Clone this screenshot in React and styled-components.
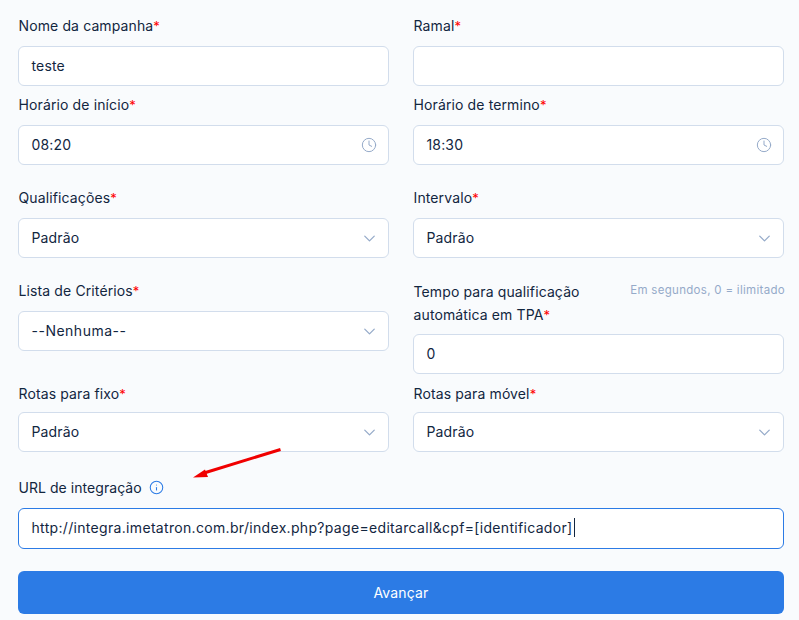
import React from "react";
import styled, { createGlobalStyle } from "styled-components";
import { Clock, ChevronDown, Info } from "lucide-react";

const Global = createGlobalStyle`
  html, body { margin: 0; padding: 0; background: #f9fbfd; }
  body { font-family: Inter, "Noto Sans", "Liberation Sans", sans-serif; color: #12263f; }
`;

const Page = styled.form`
  position: relative;
  width: 799px;
  height: 620px;
  box-sizing: border-box;
  padding: 15px 15px 0 18px;
  overflow: hidden;
`;

const Row = styled.div`
  display: grid;
  grid-template-columns: 371px 371px;
  column-gap: 24px;
  margin-bottom: ${(p) => p.$bottom}px;
`;

const Field = styled.div`
  display: flex;
  flex-direction: column;
  min-width: 0;
`;

const LabelRow = styled.div`
  display: flex;
  justify-content: space-between;
  align-items: flex-start;
  margin-bottom: ${(p) => p.$gap ?? 9}px;
`;

const Label = styled.label`
  display: block;
  margin-left: 0.5px;
  font-size: 14px;
  letter-spacing: 0.12px;
  line-height: ${(p) => p.$line ?? 22}px;
`;

const Required = styled.span`
  color: #f00;
  font-size: 13px;
  line-height: 0;
`;

const Hint = styled.span`
  margin-right: -1px;
  font-size: 11.5px;
  line-height: 20px;
  color: #95aac9;
  white-space: nowrap;
  letter-spacing: 0.3px;
`;

const Box = styled.div`
  display: flex;
  align-items: center;
  justify-content: space-between;
  box-sizing: border-box;
  height: ${(p) => p.$height ?? 40}px;
  padding: 0 12px 0 12.5px;
  background: #fff;
  border: 1px solid ${(p) => (p.$focus ? "#2c7be5" : "#d2ddec")};
  border-radius: 6px;
  font-size: 14px;
  white-space: nowrap;
`;

const Value = styled.span`
  margin-bottom: 2px;
  letter-spacing: ${(p) => p.$spread ?? 0.15}px;
`;

const Caret = styled.span`
  display: inline-block;
  width: 1px;
  height: 19px;
  margin-left: 1px;
  background: #12263f;
  vertical-align: -4px;
`;

const ClockIcon = styled(Clock)`
  margin-right: -1px;
`;

const Chevron = styled(ChevronDown)`
  margin-right: -3px;
`;

const InlineLabel = styled.div`
  display: flex;
  align-items: center;
  gap: 7px;
  height: 22px;
  margin-bottom: 10px;
  margin-left: 0.5px;
  font-size: 14px;
  letter-spacing: 0.05px;
`;

const InfoIcon = styled(Info)`
  color: #2c7be5;
`;

const Submit = styled.button`
  display: block;
  width: 766px;
  height: 43px;
  padding: 0;
  margin-top: 22px;
  background: #2c7be5;
  color: #fff;
  border: 0;
  border-radius: 6px;
  font: inherit;
  font-size: 14px;
  letter-spacing: 0.15px;
`;

const Arrow = styled.svg`
  position: absolute;
  left: 0;
  top: 0;
  pointer-events: none;
`;

const Field1 = ({ label, value, icon, gap, spread }) => (
  <Field>
    <LabelRow $gap={gap}>
      <Label>
        {label}
        <Required>*</Required>
      </Label>
    </LabelRow>
    <Box>
      <Value $spread={spread}>{value}</Value>
      {icon === "clock" && <ClockIcon size={16} color="#95aac9" strokeWidth={1.5} />}
      {icon === "chevron" && <Chevron size={19} color="#95aac9" strokeWidth={1.6} />}
    </Box>
  </Field>
);

export default function App() {
  return (
    <>
      <Global />
      <Page>
        <Row $bottom={8}>
          <Field1 label="Nome da campanha" value="teste" />
          <Field1 label="Ramal" value="" />
        </Row>
        <Row $bottom={22}>
          <Field1 label="Horário de início" value="08:20" icon="clock" />
          <Field1 label="Horário de termino" value="18:30" icon="clock" />
        </Row>
        <Row $bottom={22}>
          <Field1 label="Qualificações" value="Padrão" icon="chevron" />
          <Field1 label="Intervalo" value="Padrão" icon="chevron" />
        </Row>
        <Row $bottom={9}>
          <Field1 label="Lista de Critérios" value="--Nenhuma--" icon="chevron" spread={0.5} />
          <Field>
            <LabelRow $gap={8}>
              <Label $line={23}>
                Tempo para qualificação automática em TPA<Required>*</Required>
              </Label>
              <Hint>Em segundos, 0 = ilimitado</Hint>
            </LabelRow>
            <Box>
              <Value>0</Value>
            </Box>
          </Field>
        </Row>
        <Row $bottom={24}>
          <Field1 label="Rotas para fixo" value="Padrão" icon="chevron" gap={7} />
          <Field1 label="Rotas para móvel" value="Padrão" icon="chevron" gap={7} />
        </Row>
        <InlineLabel>
          <span>URL de integração</span>
          <InfoIcon size={15} strokeWidth={1.7} />
        </InlineLabel>
        <Box $focus $height={41}>
          <Value $spread={0.32}>
            http://integra.imetatron.com.br/index.php?page=editarcall&cpf=[identificador]
            <Caret />
          </Value>
        </Box>
        <Submit type="button">Avançar</Submit>
        <Arrow width="799" height="620" viewBox="0 0 799 620">
          <path d="M280.5 449.5 L204 473" stroke="#f00000" strokeWidth="3" fill="none" />
          <path d="M193 477.5 L205 469.5 L208 477 Z" fill="#f00000" />
        </Arrow>
      </Page>
    </>
  );
}
